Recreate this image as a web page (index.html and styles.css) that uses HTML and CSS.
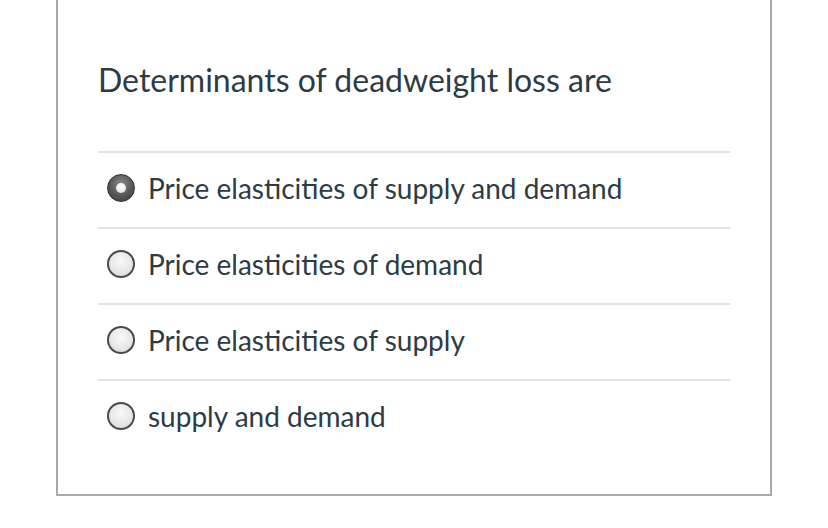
FILE: index.html
```html
<!DOCTYPE html>
<html>
<head>
<meta charset="utf-8">
<link rel="stylesheet" href="styles.css">
</head>
<body>
<div class="card">
  <h1 class="question">Determinants of deadweight loss are</h1>
  <ul class="answers">
    <li class="answer"><span class="radio checked"></span><span class="label">Price elasticities of supply and demand</span></li>
    <li class="answer"><span class="radio"></span><span class="label">Price elasticities of demand</span></li>
    <li class="answer"><span class="radio"></span><span class="label">Price elasticities of supply</span></li>
    <li class="answer"><span class="radio"></span><span class="label">supply and demand</span></li>
  </ul>
</div>
</body>
</html>
```
FILE: styles.css
```css
html, body {
  margin: 0;
  padding: 0;
  background: #ffffff;
}
body {
  font-family: Lato, "Noto Sans", sans-serif;
  color: #2d3b45;
}
.card {
  margin-left: 56px;
  width: 716px;
  height: 496px;
  border: 2px solid #a9a9a9;
  border-top: none;
  padding: 0 40px;
  box-sizing: border-box;
}
.question {
  margin: 0;
  padding-top: 61px;
  font-size: 32px;
  font-weight: 400;
  line-height: 38px;
  height: 151px;
  box-sizing: border-box;
}
.answers {
  list-style: none;
  margin: 0;
  padding: 0;
}
.answer {
  display: flex;
  align-items: center;
  height: 76px;
  border-top: 2px solid #e2e2e2;
  box-sizing: border-box;
  padding-left: 9px;
  padding-bottom: 4px;
}
.radio {
  width: 28px;
  height: 28px;
  border-radius: 50%;
  border: 2px solid #4a4a4a;
  box-sizing: border-box;
  background: radial-gradient(circle at 50% 40%, #fafafa 0%, #e6e6e6 60%, #cfcfcf 100%);
  flex: none;
  display: flex;
  align-items: center;
  justify-content: center;
}
.radio.checked {
  border: 1px solid #333;
  background: radial-gradient(circle at 50% 35%, #8a8a8a 0%, #555 55%, #3a3a3a 100%);
}
.radio.checked::after {
  content: "";
  width: 10px;
  height: 10px;
  border-radius: 50%;
  background: radial-gradient(circle at 50% 35%, #ffffff 0%, #e8e8e8 70%, #cccccc 100%);
}
.label {
  margin-left: 13px;
  font-size: 28px;
  line-height: 34px;
}
```
